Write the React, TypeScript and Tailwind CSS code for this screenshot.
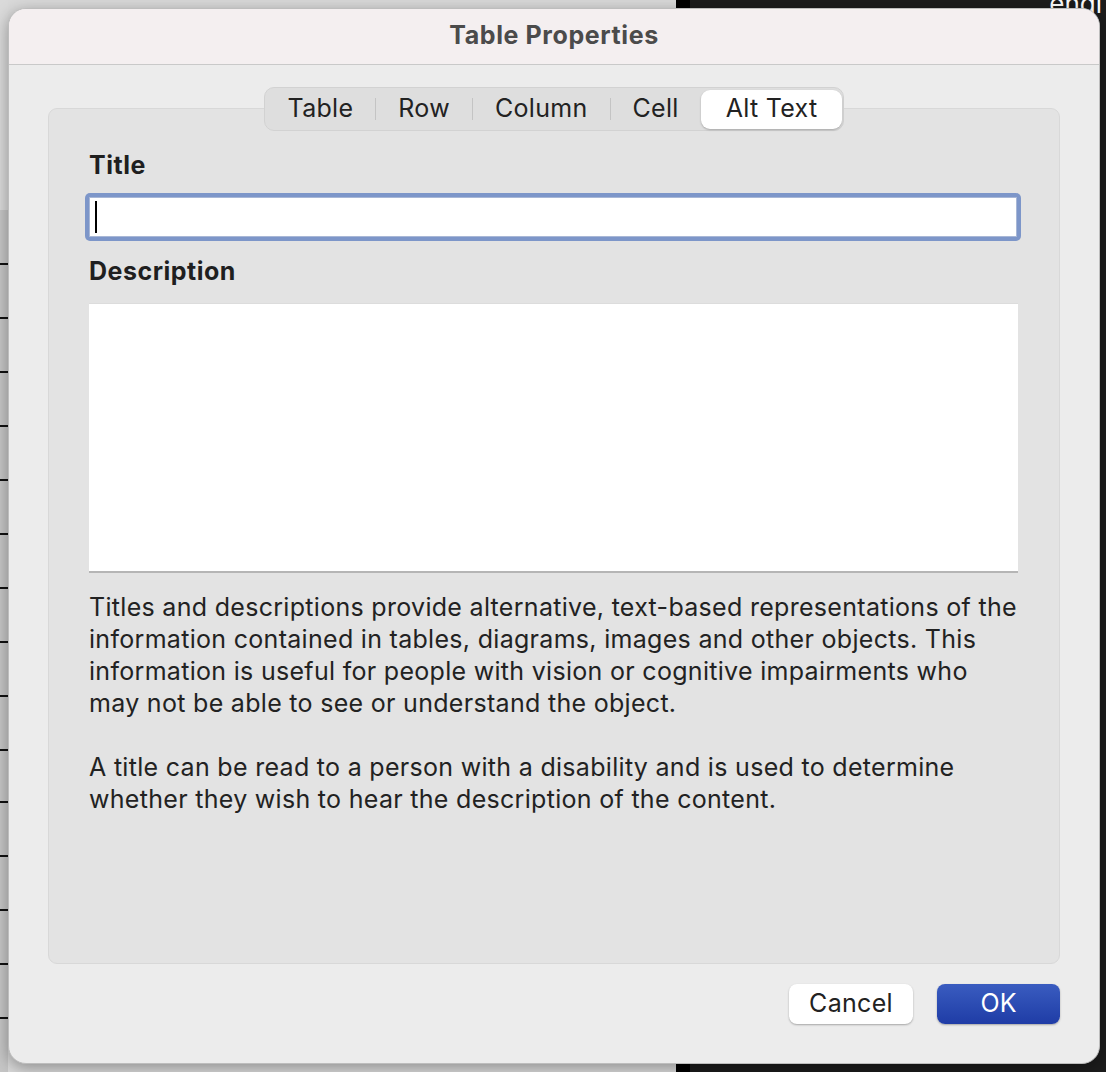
const tabs = ["Table", "Row", "Column", "Cell", "Alt Text"];

const font = { fontFamily: "Inter, 'Noto Sans', sans-serif" };

function LeftStrip() {
  const lines = [263, 317, 371, 425, 479, 533, 587, 641, 695, 749, 801, 855, 909, 963, 1017];
  return (
    <div className="relative w-[8px] h-full bg-[#c6c6c6] overflow-hidden">
      <div className="h-[210px] bg-[#dadada]" />
      {lines.map((y) => (
        <div key={y} className="absolute left-0 w-[8px] h-[2px] bg-[#111]" style={{ top: y }} />
      ))}
    </div>
  );
}

function TabBar() {
  return (
    <div className="relative z-10 flex items-center h-[44px] rounded-[10px] bg-[#dedede] border border-[#d2d2d2] px-[1px] text-[25px] tracking-[0.3px] text-[#222]">
      {tabs.map((t, i) => {
        const active = t === "Alt Text";
        const next = tabs[i + 1];
        const showDivider = i < tabs.length - 1 && !active && next !== "Alt Text";
        return (
          <div key={t} className="flex items-center h-full">
            <div
              className={
                active
                  ? "h-[39px] px-[25px] flex items-center bg-white rounded-[9px] shadow-[0_1px_2px_rgba(0,0,0,0.25)]"
                  : "h-[39px] px-[22px] flex items-center"
              }
            >
              {t}
            </div>
            {showDivider && <div className="w-px h-[22px] bg-[#c4c4c4]" />}
          </div>
        );
      })}
    </div>
  );
}

export default function App() {
  return (
    <div className="relative w-[1106px] h-[1072px] overflow-hidden bg-[#111]" style={font}>
      {/* backdrop */}
      <div className="absolute inset-0 flex">
        <LeftStrip />
        <div className="w-[668px] h-full bg-[#d9d9d9]" />
        <div className="w-[14px] h-full bg-black" />
        <div className="flex-1 h-full bg-[#1c1c1c]" />
      </div>
      <div className="absolute top-[-16px] right-[4px] text-[26px] text-white">engi</div>

      {/* dialog */}
      <div className="absolute left-[8px] top-[8px] w-[1092px] h-[1056px] rounded-[18px] bg-[#ececec] border border-[#bdbdbd] shadow-[0_4px_16px_rgba(0,0,0,0.35)] overflow-hidden flex flex-col">
        <div className="h-[56px] shrink-0 bg-[#f4eff0] border-b border-[#c9c9c9] flex items-center justify-center">
          <span className="text-[25px] tracking-[0.6px] font-bold text-[#4b4b4b] mt-[-2px]">Table Properties</span>
        </div>

        <div className="flex-1 px-[39px] pt-[22px] flex flex-col">
          <div className="flex justify-center">
            <TabBar />
          </div>
          <div className="mt-[-23px] h-[856px] rounded-[9px] bg-[#e3e3e3] border border-[#d8d8d8] px-[40px] pt-[40px]">
            <div className="text-[25px] tracking-[0.5px] font-bold text-[#1f1f1f] leading-[32px]">Title</div>
            <div className="mt-[12px] ml-[-4px] w-[936px] h-[48px] rounded-[5px] bg-[#7d96c9] p-[4px]">
              <div className="h-full bg-white border border-[#a8b7d6] flex items-center pl-[5px]">
                <div className="w-[2px] h-[32px] bg-black" />
              </div>
            </div>
            <div className="mt-[14px] text-[25px] tracking-[0.5px] font-bold text-[#1f1f1f] leading-[32px]">Description</div>
            <div className="mt-[16px] w-[929px] h-[270px] bg-white border-t border-[#dcdcdc] border-b-2 border-b-[#b5b5b5]" />
            <div className="mt-[18px] text-[25px] tracking-[0.3px] leading-[32px] text-[#222]">
              <p>
                Titles and descriptions provide alternative, text-based representations of the
                <br />
                information contained in tables, diagrams, images and other objects. This
                <br />
                information is useful for people with vision or cognitive impairments who
                <br />
                may not be able to see or understand the object.
              </p>
              <p className="mt-[32px]">
                A title can be read to a person with a disability and is used to determine
                <br />
                whether they wish to hear the description of the content.
              </p>
            </div>
          </div>

          <div className="flex justify-end gap-[24px] mt-[20px]">
            <button className="w-[124px] h-[40px] rounded-[8px] bg-white text-[25px] tracking-[0.3px] text-[#222] shadow-[0_1px_2px_rgba(0,0,0,0.3)]">
              Cancel
            </button>
            <button className="w-[123px] h-[40px] rounded-[8px] bg-gradient-to-b from-[#3a5cc0] to-[#1f3ca6] text-[25px] text-white shadow-[0_1px_2px_rgba(0,0,0,0.3)]">
              OK
            </button>
          </div>
        </div>
      </div>
    </div>
  );
}
